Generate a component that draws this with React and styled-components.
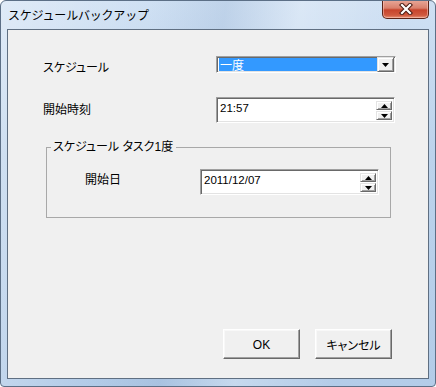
import styled, { createGlobalStyle } from "styled-components";

const GlobalStyle = createGlobalStyle`
  html, body {
    margin: 0;
    padding: 0;
    background: #ffffff;
  }
  body {
    font-family: "Liberation Sans", "Noto Sans CJK JP", sans-serif;
    font-size: 12px;
  }
`;

const uiFont = `"Liberation Sans", "Noto Sans CJK JP", sans-serif`;

const Window = styled.div`
  box-sizing: border-box;
  width: 436px;
  height: 387px;
  border: 1px solid #5c6f86;
  border-radius: 6px 6px 4px 4px;
  background: linear-gradient(
      100deg,
      rgba(255, 255, 255, 0.35) 0%,
      rgba(255, 255, 255, 0) 30%,
      rgba(120, 150, 190, 0.18) 45%,
      rgba(255, 255, 255, 0.25) 60%,
      rgba(255, 255, 255, 0) 80%
    ),
    linear-gradient(to bottom, #cfe0f3 0%, #bcd3ec 40%, #b3cce8 100%);
  display: flex;
  flex-direction: column;
  overflow: hidden;
`;

const TitleBar = styled.div`
  height: 28px;
  display: flex;
  align-items: flex-start;
  flex-shrink: 0;
`;

const Title = styled.div`
  padding: 6px 0 0 7px;
  line-height: 16px;
  font-family: "Noto Sans CJK JP", sans-serif;
  font-size: 12px;
  color: #000;
  letter-spacing: -0.2px;
`;

const CloseButton = styled.div`
  margin: -1px 6px 0 auto;
  width: 47px;
  height: 19px;
  box-sizing: border-box;
  border: 1px solid #5b2418;
  border-top: none;
  border-radius: 0 0 5px 5px;
  background: linear-gradient(
    to bottom,
    #e9a99a 0%,
    #d9806c 45%,
    #c7442c 55%,
    #d05a3f 85%,
    #e8957a 100%
  );
  box-shadow: inset 0 0 0 1px rgba(255, 210, 200, 0.5);
  display: flex;
  align-items: center;
  justify-content: center;
`;

const Client = styled.div`
  flex: 1;
  margin: 0 6px 7px 6px;
  border: 1px solid #5f6f82;
  background: #f0f0f0;
  display: flex;
  flex-direction: column;
  font-family: ${uiFont};
  font-feature-settings: "palt";
  font-size: 12px;
  color: #000;
`;

const FormRow = styled.div`
  display: flex;
  align-items: flex-start;
  margin-top: ${(p) => p.$top}px;
  padding-left: ${(p) => p.$left}px;
`;

const Label = styled.div`
  width: ${(p) => p.$width}px;
  padding-top: ${(p) => p.$top}px;
  line-height: 14px;
  white-space: nowrap;
`;

const sunken = `
  box-sizing: border-box;
  border: 1px solid;
  border-color: #a0a0a0 #ffffff #ffffff #a0a0a0;
  box-shadow: inset 1px 1px 0 #696969, inset -1px -1px 0 #e3e3e3;
  background: #ffffff;
`;

const raised = `
  box-sizing: border-box;
  background: #f0f0f0;
  border: 1px solid;
  border-color: #e3e3e3 #696969 #696969 #e3e3e3;
  box-shadow: inset 1px 1px 0 #ffffff, inset -1px -1px 0 #a0a0a0;
  display: flex;
  align-items: center;
  justify-content: center;
`;

const Combo = styled.div`
  ${sunken}
  width: 180px;
  height: 17px;
  display: flex;
  padding: 1px 1px 1px 2px;
`;

const ComboValue = styled.div`
  flex: 1;
  background: #3399ff;
  color: #ffffff;
  line-height: 13px;
  font-size: 12px;
  padding-left: 1px;
  font-family: "Noto Sans CJK JP", sans-serif;
  overflow: visible;
`;

const DropButton = styled.div`
  ${raised}
  width: 17px;
  height: 15px;
  margin-top: -1px;
`;

const SpinField = styled.div`
  ${sunken}
  width: ${(p) => p.$width}px;
  height: 26px;
  display: flex;
  padding: 2px 2px 2px 3px;
`;

const FieldText = styled.div`
  flex: 1;
  line-height: 14px;
  padding-top: 1px;
  font-family: ${uiFont};
  font-size: 11.5px;
`;

const Spin = styled.div`
  display: flex;
  flex-direction: column;
  gap: 1px;
  padding-top: 1px;
`;

const SpinButton = styled.div`
  ${raised}
  width: 16px;
  height: 10px;
`;

const Group = styled.fieldset`
  margin: 17px 0 0 38px;
  width: 345px;
  box-sizing: border-box;
  border: 1px solid #a8a8a8;
  border-radius: 0;
  padding: 15px 0 22px 0;
  min-width: 0;
`;

const Legend = styled.legend`
  margin-left: 4px;
  padding: 0 3px 0 2px;
  line-height: 14px;
  font-size: 12px;
`;

const Buttons = styled.div`
  margin-top: auto;
  display: flex;
  justify-content: flex-end;
  gap: 15px;
  padding: 0 36px 19px 0;
`;

const PushButton = styled.div`
  box-sizing: border-box;
  width: 77px;
  height: 30px;
  background: #f0f0f0;
  border: 1px solid;
  border-color: #ffffff #696969 #696969 #ffffff;
  box-shadow: inset -1px -1px 0 #a0a0a0, inset 1px 1px 0 #f8f8f8;
  display: flex;
  align-items: center;
  justify-content: center;
  font-size: 12px;
  padding-top: 1px;
`;

const Arrow = ({ up }) => (
  <svg width="7" height="4" viewBox="0 0 7 4">
    {up ? (
      <path d="M3.5 0 L7 4 L0 4 Z" fill="#000" />
    ) : (
      <path d="M0 0 L7 0 L3.5 4 Z" fill="#000" />
    )}
  </svg>
);

const CloseGlyph = () => (
  <svg width="14" height="12" viewBox="0 0 14 12">
    <path
      d="M3 2 L11 10 M11 2 L3 10"
      stroke="#4a1a12"
      strokeWidth="4.2"
      strokeLinecap="square"
    />
    <path
      d="M3 2 L11 10 M11 2 L3 10"
      stroke="#ffffff"
      strokeWidth="2.2"
      strokeLinecap="square"
    />
  </svg>
);

const SpinControl = () => (
  <Spin>
    <SpinButton>
      <Arrow up />
    </SpinButton>
    <SpinButton>
      <Arrow />
    </SpinButton>
  </Spin>
);

export default function App() {
  return (
    <>
      <GlobalStyle />
      <Window>
        <TitleBar>
          <Title>スケジュールバックアップ</Title>
          <CloseButton>
            <CloseGlyph />
          </CloseButton>
        </TitleBar>
        <Client>
          <FormRow $top={26} $left={35}>
            <Label $width={173} $top={5}>
              スケジュール
            </Label>
            <Combo>
              <ComboValue>一度</ComboValue>
              <DropButton>
                <Arrow />
              </DropButton>
            </Combo>
          </FormRow>
          <FormRow $top={22} $left={35}>
            <Label $width={173} $top={6}>
              開始時刻
            </Label>
            <SpinField $width={179}>
              <FieldText>21:57</FieldText>
              <SpinControl />
            </SpinField>
          </FormRow>
          <Group>
            <Legend>スケジュール タスク1度</Legend>
            <FormRow $top={0} $left={38}>
              <Label $width={115} $top={4}>
                開始日
              </Label>
              <SpinField $width={179}>
                <FieldText>2011/12/07</FieldText>
                <SpinControl />
              </SpinField>
            </FormRow>
          </Group>
          <Buttons>
            <PushButton>OK</PushButton>
            <PushButton>キャンセル</PushButton>
          </Buttons>
        </Client>
      </Window>
    </>
  );
}
